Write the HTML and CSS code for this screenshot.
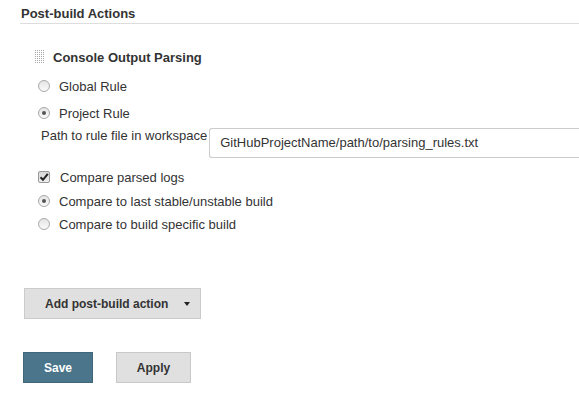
FILE: index.html
```html
<!DOCTYPE html>
<html>
<head>
<meta charset="utf-8">
<link rel="stylesheet" href="styles.css">
</head>
<body>
<div class="page">
  <div class="section-header">Post-build Actions</div>
  <div class="block">
    <div class="title-row">
      <svg class="grip" width="10" height="14" viewBox="0 0 10 14">
        <defs>
          <pattern id="dots" width="2" height="2" patternUnits="userSpaceOnUse">
            <rect x="0" y="0" width="1" height="1" fill="#a8a8a8"/>
          </pattern>
        </defs>
        <rect x="0" y="0" width="10" height="14" fill="url(#dots)"/>
      </svg>
      <span class="title">Console Output Parsing</span>
    </div>
    <div class="opt row-global"><span class="radio"></span><span>Global Rule</span></div>
    <div class="opt row-project"><span class="radio on"></span><span>Project Rule</span></div>
    <div class="path-row">
      <span class="path-label">Path to rule file in workspace</span>
      <div class="input">GitHubProjectName/path/to/parsing_rules.txt</div>
    </div>
    <div class="opt row-check"><span class="check"><svg width="10" height="10" viewBox="0 0 10 10"><path d="M1.5 5.2 L4 7.8 L8.8 1.8" fill="none" stroke="#222" stroke-width="2"/></svg></span><span class="check-text">Compare parsed logs</span></div>
    <div class="opt row-last"><span class="radio on"></span><span>Compare to last stable/unstable build</span></div>
    <div class="opt row-specific"><span class="radio"></span><span>Compare to build specific build</span></div>
  </div>
  <div class="add-wrap">
    <div class="btn add"><span>Add post-build action</span><span class="caret"></span></div>
  </div>
  <div class="actions">
    <div class="btn save">Save</div>
    <div class="btn apply">Apply</div>
  </div>
</div>
</body>
</html>
```
FILE: styles.css
```css
html, body {
  margin: 0;
  padding: 0;
  background: #fff;
}
body {
  font-family: "Liberation Sans", Arial, sans-serif;
  font-size: 13px;
  color: #333;
  overflow: hidden;
}
.page {
  padding-left: 20px;
  width: 559px;
}
.section-header {
  font-weight: bold;
  font-size: 13px;
  line-height: 16px;
  padding: 6px 0 1px 1px;
  border-bottom: 1px solid #ddd;
}
.block {
  display: flex;
  flex-direction: column;
}
.title-row {
  display: flex;
  align-items: center;
  height: 20px;
  margin-top: 23px;
  padding-left: 15px;
}
.grip {
  margin-right: 8px;
}
.title {
  font-weight: bold;
}
.opt {
  display: flex;
  align-items: center;
  height: 20px;
  padding-left: 18px;
}
.row-global { margin-top: 9px; }
.row-project { margin-top: 7px; }
.row-check { margin-top: 9px; }
.row-last { margin-top: 4px; }
.row-specific { margin-top: 3px; }
.radio {
  width: 10px;
  height: 10px;
  border-radius: 50%;
  border: 1px solid #a9a9a9;
  background: linear-gradient(#e4e4e4, #fafafa);
  margin-right: 9px;
  position: relative;
  box-sizing: content-box;
}
.radio.on::after {
  content: "";
  position: absolute;
  left: 3px;
  top: 3px;
  width: 4px;
  height: 4px;
  border-radius: 50%;
  background: #555;
}
.check {
  width: 10px;
  height: 10px;
  border: 1px solid #9a9a9a;
  border-radius: 2px;
  background: linear-gradient(#d8d8d8, #eeeeee);
  margin-right: 10px;
  display: flex;
  align-items: center;
  justify-content: center;
}
.path-row {
  display: flex;
  align-items: flex-start;
  margin-top: 5px;
  padding-left: 21px;
  height: 30px;
}
.path-label {
  flex: 0 0 auto;
  white-space: nowrap;
  line-height: 16px;
  margin-right: 2px;
}
.input {
  flex: 1 1 auto;
  min-width: 0;
  height: 30px;
  box-sizing: border-box;
  border: 1px solid #ccc;
  border-right: none;
  border-radius: 3px 0 0 3px;
  padding: 0 10px;
  line-height: 28px;
  color: #333;
  white-space: nowrap;
  overflow: hidden;
}
.add-wrap {
  margin-top: 54px;
  padding-left: 4px;
  display: flex;
}
.btn {
  box-sizing: border-box;
  font-weight: bold;
  font-size: 12px;
  display: flex;
  align-items: center;
  justify-content: center;
}
.add {
  width: 177px;
  height: 31px;
  background: #e0e0e0;
  border: 1px solid #cbcbcb;
  justify-content: flex-start;
  padding-left: 20px;
}
.caret {
  width: 0;
  height: 0;
  border-left: 3px solid transparent;
  border-right: 3px solid transparent;
  border-top: 4px solid #222;
  margin-left: 16px;
}
.actions {
  display: flex;
  margin-top: 33px;
  padding-left: 3px;
  gap: 23px;
}
.save {
  width: 70px;
  height: 31px;
  background: #4b758b;
  border: 1px solid #3f6679;
  color: #fff;
}
.apply {
  width: 75px;
  height: 31px;
  background: #e0e0e0;
  border: 1px solid #c8c8c8;
  color: #333;
}
```
